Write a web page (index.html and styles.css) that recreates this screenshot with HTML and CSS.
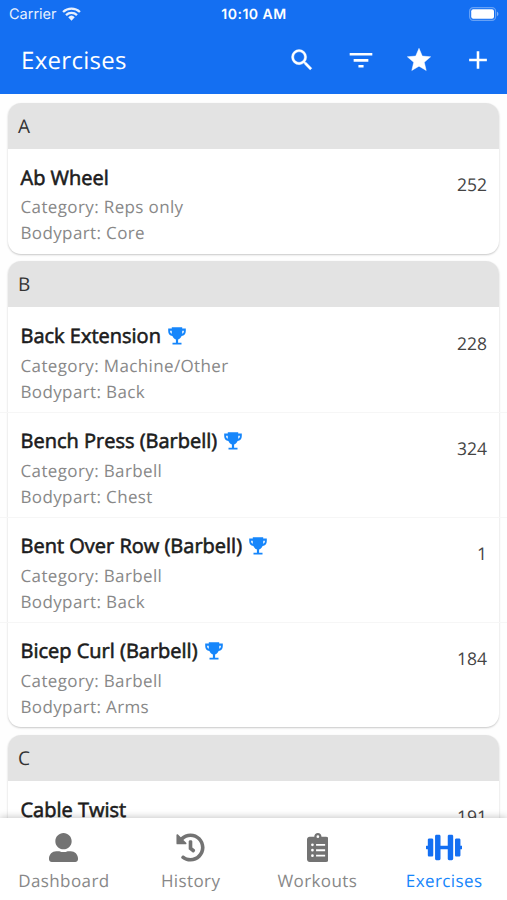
FILE: index.html
```html
<!DOCTYPE html>
<html lang="en">
<head>
    <meta charset="UTF-8">
    <meta name="viewport" content="width=device-width, initial-scale=1.0">
    <title>Exercises</title>
    <link rel="stylesheet" href="styles.css">
</head>
<body>
    <!-- Shared icons -->
    <svg class="sprite">
        <symbol id="trophy" viewBox="0 0 18 18">
            <path fill-rule="evenodd" d="M3.800 0.300h10.400v1.300h3.600v2.400c0 2.800-1.500 4.700-4.200 5.100-.8 1.900-2 2.900-3.500 3.300v3.300h3.400v1.900h-9v-1.900h3.400v-3.300c-1.500-.4-2.700-1.400-3.500-3.300C1.700 8.700.2 6.800.2 4V1.600h3.600zM3.700 3.700H2.100c0 1.500.5 2.500 1.700 3zM14.300 3.700l-.1 3c1.200-.5 1.700-1.500 1.700-3z"/>
        </symbol>
    </svg>

    <div class="app">
        <header class="header">
            <div class="status-bar">
                <div class="carrier">
                    <span>Carrier</span>
                    <svg class="wifi" viewBox="0 0 18 13">
                        <path d="M1 4.600a11.600 11.600 0 0 1 16 0M3.800 7.500a7.600 7.600 0 0 1 10.400 0" fill="none" stroke="currentColor" stroke-width="2.200"/>
                        <path d="M5.900 9.500a4.500 4.500 0 0 1 6.200 0L9 12.800z" fill="currentColor"/>
                    </svg>
                </div>
                <div class="time">10:10 AM</div>
                <svg class="battery" viewBox="0 0 30 14">
                    <rect x="0.600" y="0.600" width="26" height="12.800" rx="3.600" fill="none" stroke="#fff" stroke-opacity="0.350" stroke-width="1.200"/>
                    <rect x="2.200" y="2.200" width="22.800" height="9.600" rx="2" fill="#fff"/>
                    <path d="M28 4.800v4.400c1.900-.7 1.900-3.700 0-4.400z" fill="#fff" fill-opacity="0.450"/>
                </svg>
            </div>
            <div class="toolbar">
                <h1>Exercises</h1>
                <div class="actions">
                    <svg viewBox="0 0 24 24"><path d="M15.500 14h-.79l-.28-.27A6.471 6.471 0 0 0 16 9.500 6.500 6.500 0 1 0 9.500 16c1.610 0 3.090-.59 4.230-1.570l.27.28v.79l5 4.990L20.490 19l-4.990-5zm-6 0C7.010 14 5 11.990 5 9.500S7.010 5 9.500 5 14 7.010 14 9.500 11.990 14 9.500 14z" stroke="#fff" stroke-width="0.300"/></svg>
                    <svg viewBox="0 0 24 24"><path d="M2.300 6h19.400v2.200H2.300zM5.700 11.200h12.600v2.200H5.700zM9.800 16.300h4.400v2.200H9.800z"/></svg>
                    <svg viewBox="0 0 24 24"><path d="M12 17.270L18.180 21l-1.640-7.030L22 9.240l-7.190-.61L12 2 9.190 8.630 2 9.240l5.460 4.730L5.820 21z" stroke="#fff" stroke-width="0.400"/></svg>
                    <svg viewBox="0 0 24 24"><path d="M19.600 13.100h-6.500v6.500h-2.200v-6.500H4.400v-2.200h6.500V4.400h2.200v6.500h6.500z"/></svg>
                </div>
            </div>
        </header>

        <main class="content">
            <section class="card">
                <h2>A</h2>
                <div class="item">
                    <div class="info">
                        <h3>Ab Wheel</h3>
                        <p>Category: Reps only</p>
                        <p>Bodypart: Core</p>
                    </div>
                    <div class="count">252</div>
                </div>
            </section>

            <section class="card">
                <h2>B</h2>
                <div class="item">
                    <div class="info">
                        <h3>Back Extension <svg class="trophy"><use href="#trophy"/></svg></h3>
                        <p>Category: Machine/Other</p>
                        <p>Bodypart: Back</p>
                    </div>
                    <div class="count">228</div>
                </div>
                <div class="item">
                    <div class="info">
                        <h3>Bench Press (Barbell) <svg class="trophy"><use href="#trophy"/></svg></h3>
                        <p>Category: Barbell</p>
                        <p>Bodypart: Chest</p>
                    </div>
                    <div class="count">324</div>
                </div>
                <div class="item">
                    <div class="info">
                        <h3>Bent Over Row (Barbell) <svg class="trophy"><use href="#trophy"/></svg></h3>
                        <p>Category: Barbell</p>
                        <p>Bodypart: Back</p>
                    </div>
                    <div class="count">1</div>
                </div>
                <div class="item">
                    <div class="info">
                        <h3>Bicep Curl (Barbell) <svg class="trophy"><use href="#trophy"/></svg></h3>
                        <p>Category: Barbell</p>
                        <p>Bodypart: Arms</p>
                    </div>
                    <div class="count">184</div>
                </div>
            </section>

            <section class="card">
                <h2>C</h2>
                <div class="item">
                    <div class="info">
                        <h3>Cable Twist</h3>
                    </div>
                    <div class="count">191</div>
                </div>
            </section>
        </main>

        <nav class="tabs">
            <a class="tab">
                <svg viewBox="0 0 512 512"><path d="M256 288c79.500 0 144-64.500 144-144S335.500 0 256 0 112 64.500 112 144s64.500 144 144 144zm128 32h-55.100c-22.200 10.200-46.900 16-72.900 16s-50.600-5.800-72.900-16H128C57.300 320 0 377.300 0 448v16c0 26.500 21.500 48 48 48h416c26.500 0 48-21.500 48-48v-16c0-70.700-57.300-128-128-128z"/></svg>
                <span>Dashboard</span>
            </a>
            <a class="tab">
                <svg viewBox="0 0 512 512"><path d="M504 255.531c.253 136.640-111.180 248.372-247.820 248.468-59.015.042-113.223-20.530-155.822-54.911-11.077-8.940-11.905-25.541-1.839-35.607l11.267-11.267c8.609-8.609 22.353-9.551 31.891-1.984C173.062 425.135 212.781 440 256 440c101.705 0 184-82.311 184-184 0-101.705-82.311-184-184-184-48.814 0-93.149 18.969-126.068 49.932l50.754 50.754c10.080 10.080 2.941 27.314-11.313 27.314H24c-8.837 0-16-7.163-16-16V38.627c0-14.254 17.234-21.393 27.314-11.314l49.372 49.372C129.209 34.136 189.552 8 256 8c136.810 0 247.747 110.780 248 247.531zm-180.912 78.784l9.823-12.630c8.138-10.463 6.253-25.542-4.210-33.679L288 256.349V152c0-13.255-10.745-24-24-24h-16c-13.255 0-24 10.745-24 24v135.651l65.409 50.874c10.463 8.137 25.541 6.253 33.679-4.210z"/></svg>
                <span>History</span>
            </a>
            <a class="tab">
                <svg viewBox="0 0 384 512"><path fill-rule="evenodd" d="M336 64h-80c0-35.300-28.700-64-64-64s-64 28.700-64 64H48C21.500 64 0 85.500 0 112v352c0 26.500 21.500 48 48 48h288c26.500 0 48-21.500 48-48V112c0-26.500-21.500-48-48-48zM96 424a24 24 0 1 1 0-48 24 24 0 0 1 0 48zm0-96a24 24 0 1 1 0-48 24 24 0 0 1 0 48zm0-96a24 24 0 1 1 0-48 24 24 0 0 1 0 48zm96-192a24 24 0 1 1 0 48 24 24 0 0 1 0-48zM160 384h160v32H160zM160 288h160v32H160zM160 192h160v32H160z"/></svg>
                <span>Workouts</span>
            </a>
            <a class="tab active">
                <svg viewBox="0 0 640 512"><path d="M104 96H56c-13.300 0-24 10.700-24 24v104H8c-4.400 0-8 3.600-8 8v48c0 4.400 3.600 8 8 8h24v104c0 13.300 10.700 24 24 24h48c13.300 0 24-10.700 24-24V120c0-13.300-10.700-24-24-24zm528 128h-24V120c0-13.300-10.700-24-24-24h-48c-13.300 0-24 10.700-24 24v272c0 13.300 10.700 24 24 24h48c13.300 0 24-10.700 24-24V288h24c4.400 0 8-3.600 8-8v-48c0-4.400-3.600-8-8-8zM456 32h-48c-13.300 0-24 10.700-24 24v168H256V56c0-13.300-10.700-24-24-24h-48c-13.300 0-24 10.700-24 24v400c0 13.300 10.700 24 24 24h48c13.300 0 24-10.700 24-24V288h128v168c0 13.300 10.700 24 24 24h48c13.300 0 24-10.700 24-24V56c0-13.300-10.700-24-24-24z"/></svg>
                <span>Exercises</span>
            </a>
        </nav>
    </div>
</body>
</html>
```
FILE: styles.css
```css
:root {
    --blue: #146ff2;
    --trophy: #1686fb;
    --gray: #737373;
}

* {
    box-sizing: border-box;
}

body {
    margin: 0;
    font-family: 'Open Sans', sans-serif;
    background-color: #fefefe;
    overflow: hidden;
    text-rendering: geometricPrecision;
}

h1, h2, h3, p {
    margin: 0;
    font-weight: 400;
}

.sprite {
    display: none;
}

.app {
    height: 100vh;
    display: flex;
    flex-direction: column;
}

/* Header */
.header {
    flex: none;
    height: 93.5px;
    background-color: var(--blue);
    color: white;
}

.status-bar {
    height: 27px;
    padding: 0 8px 0 9px;
    display: grid;
    grid-template-columns: 1fr auto 1fr;
    align-items: center;
    font-family: Inter, sans-serif;
    font-size: 14.5px;
}

.carrier {
    display: flex;
    align-items: center;
    gap: 5px;
    opacity: 0.9;
}

.carrier span {
    padding-top: 1px;
}

.wifi {
    width: 19px;
    height: 14px;
}

.time {
    padding-top: 1px;
    font-weight: 600;
    font-size: 14px;
    letter-spacing: 0.5px;
}

.battery {
    width: 30px;
    height: 14px;
    justify-self: end;
}

.toolbar {
    height: 65px;
    padding: 0 15.5px 0 21px;
    display: flex;
    align-items: center;
    justify-content: space-between;
}

h1 {
    padding-top: 2px;
    font-size: 24px;
    letter-spacing: 0.3px;
}

.actions {
    display: flex;
    gap: 30.5px;
}

.actions svg {
    width: 28px;
    height: 28px;
    fill: white;
}

/* Exercise list */
.content {
    flex: 1;
    min-height: 0;
    overflow: hidden;
    padding: 9px 8px 0;
}

.card {
    margin-bottom: 7.7px;
    border-radius: 13px;
    background-color: white;
    box-shadow: 0 1px 2px rgba(0, 0, 0, 0.22);
}

h2 {
    height: 46px;
    padding-left: 10px;
    border-radius: 13px 13px 0 0;
    background-color: #e3e3e3;
    color: #333;
    font-size: 19px;
    line-height: 47px;
}

.item {
    height: 105px;
    padding: 13.5px 12px 0 12.5px;
    display: flex;
    justify-content: space-between;
}

.item + .item {
    margin: 0 -8px;
    padding: 12.5px 20px 0 20.5px;
    border-top: 1px solid #f6f6f6;
}

h3 {
    display: flex;
    align-items: center;
    gap: 7px;
    height: 32px;
    padding-bottom: 2px;
    color: #1c1c1c;
    font-size: 20px;
    -webkit-text-stroke: 0.6px #1c1c1c;
}

.trophy {
    width: 18px;
    height: 18px;
    fill: var(--trophy);
}

.info p {
    color: #888;
    font-size: 17px;
    line-height: 26px;
    letter-spacing: 0.37px;
}

.count {
    padding-top: 10px;
    color: #444;
    font-size: 17.5px;
    line-height: 26px;
}

/* Bottom tabs */
.tabs {
    position: relative;
    flex: none;
    height: 82px;
    padding-top: 15px;
    display: flex;
    background-color: white;
    box-shadow: 0 -1px 7px rgba(0, 0, 0, 0.22);
}

.tab {
    flex: 1;
    padding-left: 1px;
    display: flex;
    flex-direction: column;
    align-items: center;
    gap: 6px;
    color: #888;
    font-size: 17px;
    line-height: 26px;
    letter-spacing: 0.4px;
}

.tab svg {
    height: 29px;
    fill: var(--gray);
}

.tab.active {
    color: var(--trophy);
}

.tab.active svg {
    fill: var(--blue);
}
```
